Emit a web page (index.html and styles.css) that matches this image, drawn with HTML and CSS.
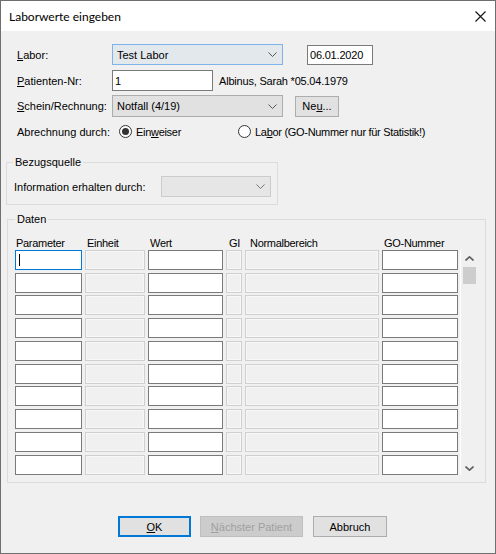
FILE: index.html
```html
<!DOCTYPE html>
<html lang="de">
<head>
<meta charset="utf-8">
<title>Laborwerte eingeben</title>
<link rel="stylesheet" href="styles.css">
</head>
<body>
<div class="window">
  <div class="titlebar">
    <span class="title">Laborwerte eingeben</span>
    <svg class="close" width="11" height="11" viewBox="0 0 11 11"><path d="M0.5 0.5 L10.5 10.5 M10.5 0.5 L0.5 10.5" stroke="#111" stroke-width="1.1" fill="none"/></svg>
  </div>
  <div class="client">
    <div class="row row-labor">
      <span class="lbl"><u>L</u>abor:</span>
      <div class="combo combo-active">
        <span class="combo-text">Test Labor</span>
        <svg class="chev" width="9" height="5" viewBox="0 0 9 5"><path d="M0.5 0.5 L4.5 4.5 L8.5 0.5" stroke="#555" fill="none"/></svg>
      </div>
      <div class="field field-date">06.01.2020</div>
    </div>
    <div class="row row-patient">
      <span class="lbl"><u>P</u>atienten-Nr:</span>
      <div class="field field-patient">1</div>
      <span class="patient-info">Albinus, Sarah *05.04.1979</span>
    </div>
    <div class="row row-schein">
      <span class="lbl"><u>S</u>chein/Rechnung:</span>
      <div class="combo combo-gray">
        <span class="combo-text">Notfall (4/19)</span>
        <svg class="chev" width="9" height="5" viewBox="0 0 9 5"><path d="M0.5 0.5 L4.5 4.5 L8.5 0.5" stroke="#555" fill="none"/></svg>
      </div>
      <div class="btn btn-new">Ne<u>u</u>...</div>
    </div>
    <div class="row row-billing">
      <span class="lbl">Abrechnung durch:</span>
      <span class="option option-first">
        <span class="radio radio-on"></span>
        <span class="radio-label">Ein<u>w</u>eiser</span>
      </span>
      <span class="option">
        <span class="radio"></span>
        <span class="radio-label">La<u>b</u>or (GO-Nummer nur für Statistik!)</span>
      </span>
    </div>

    <div class="group group-source">
      <div class="group-title">Bezugsquelle</div>
      <div class="row row-source">
        <span class="source-lbl">Information erhalten durch:</span>
        <div class="combo combo-disabled">
          <svg class="chev" width="9" height="5" viewBox="0 0 9 5"><path d="M0.5 0.5 L4.5 4.5 L8.5 0.5" stroke="#777" fill="none"/></svg>
        </div>
      </div>
    </div>

    <div class="group group-data">
      <div class="group-title">Daten</div>
      <div class="data">
        <div class="grid">
          <div class="hd hd-param">Parameter</div>
          <div class="hd hd-unit">Einheit</div>
          <div class="hd hd-value">Wert</div>
          <div class="hd hd-gi">GI</div>
          <div class="hd hd-range">Normalbereich</div>
          <div class="hd hd-go">GO-Nummer</div>

          <div class="cell edit focus"><span class="caret"></span></div><div class="cell off"></div><div class="cell edit"></div><div class="cell off"></div><div class="cell off"></div><div class="cell edit"></div>
          <div class="cell edit"></div><div class="cell off"></div><div class="cell edit"></div><div class="cell off"></div><div class="cell off"></div><div class="cell edit"></div>
          <div class="cell edit"></div><div class="cell off"></div><div class="cell edit"></div><div class="cell off"></div><div class="cell off"></div><div class="cell edit"></div>
          <div class="cell edit"></div><div class="cell off"></div><div class="cell edit"></div><div class="cell off"></div><div class="cell off"></div><div class="cell edit"></div>
          <div class="cell edit"></div><div class="cell off"></div><div class="cell edit"></div><div class="cell off"></div><div class="cell off"></div><div class="cell edit"></div>
          <div class="cell edit"></div><div class="cell off"></div><div class="cell edit"></div><div class="cell off"></div><div class="cell off"></div><div class="cell edit"></div>
          <div class="cell edit"></div><div class="cell off"></div><div class="cell edit"></div><div class="cell off"></div><div class="cell off"></div><div class="cell edit"></div>
          <div class="cell edit"></div><div class="cell off"></div><div class="cell edit"></div><div class="cell off"></div><div class="cell off"></div><div class="cell edit"></div>
          <div class="cell edit"></div><div class="cell off"></div><div class="cell edit"></div><div class="cell off"></div><div class="cell off"></div><div class="cell edit"></div>
          <div class="cell edit"></div><div class="cell off"></div><div class="cell edit"></div><div class="cell off"></div><div class="cell off"></div><div class="cell edit"></div>
        </div>
        <div class="scrollbar">
          <svg class="arrow" width="9" height="5" viewBox="0 0 9 5"><path d="M0.5 4.5 L4.5 0.8 L8.5 4.5" stroke="#606060" stroke-width="1.6" fill="none"/></svg>
          <div class="thumb"></div>
          <div class="track"></div>
          <svg class="arrow" width="9" height="5" viewBox="0 0 9 5"><path d="M0.5 0.5 L4.5 4.2 L8.5 0.5" stroke="#606060" stroke-width="1.6" fill="none"/></svg>
        </div>
      </div>
    </div>

    <div class="buttons">
      <div class="btn btn-ok"><u>O</u>K</div>
      <div class="btn btn-next"><u>N</u>ächster Patient</div>
      <div class="btn btn-cancel">Abbruch</div>
    </div>
  </div>
</div>
</body>
</html>
```

FILE: styles.css
```css
* {
  box-sizing: border-box;
}

body {
  margin: 0;
  width: 496px;
  height: 554px;
  font-family: "Liberation Sans", Arial, sans-serif;
  font-size: 11px;
  color: #000;
  background: #fff;
}

u {
  text-decoration-thickness: 1px;
  text-underline-offset: 1px;
}

.window {
  width: 496px;
  height: 554px;
  border: 1px solid #6f6f6f;
  display: flex;
  flex-direction: column;
}

/* title bar */
.titlebar {
  height: 30px;
  flex: none;
  background: #fff;
  display: flex;
  align-items: center;
  justify-content: space-between;
  padding: 1px 9px 0 8px;
}

.title {
  font-family: "Segoe UI", Lato, "Noto Sans", sans-serif;
  font-size: 12px;
}

.close {
  display: block;
}

/* dialog area */
.client {
  flex: 1;
  background: #f0f0f0;
  display: flex;
  flex-direction: column;
}

.row {
  display: flex;
  align-items: center;
}

.lbl {
  width: 95px;
  flex: none;
  white-space: nowrap;
}

.row-labor {
  margin-top: 13px;
  height: 21px;
  padding-left: 16px;
}

.row-patient {
  margin-top: 5px;
  height: 21px;
  padding-left: 16px;
}

.row-schein {
  margin-top: 4px;
  height: 22px;
  padding-left: 16px;
}

.row-billing {
  margin-top: 7px;
  height: 15px;
  padding-left: 16px;
}

/* combo boxes */
.combo {
  width: 171px;
  height: 21px;
  border: 1px solid #adadad;
  background: #e1e1e1;
  display: flex;
  align-items: center;
  justify-content: space-between;
  padding: 0 5px 0 4px;
}

.combo-active {
  border-color: #7eb4ea;
  background: #e3e8ed;
}

.combo-gray {
  height: 22px;
}

.combo-disabled {
  width: 110px;
  height: 21px;
  border-color: #cccccc;
  background: #e6e6e6;
  justify-content: flex-end;
}

.chev {
  display: block;
}

/* edit fields */
.field {
  height: 20px;
  border: 1px solid #7a7a7a;
  background: #fff;
  display: flex;
  align-items: center;
  padding-left: 2px;
}

.field-date {
  width: 66px;
  margin-left: 24px;
  letter-spacing: -0.2px;
}

.field-patient {
  width: 101px;
  height: 21px;
}

.patient-info {
  margin-left: 6px;
  white-space: nowrap;
  letter-spacing: -0.2px;
}

/* push buttons */
.btn {
  height: 21px;
  border: 1px solid #adadad;
  background: #e1e1e1;
  display: flex;
  align-items: center;
  justify-content: center;
  white-space: nowrap;
}

.btn-new {
  width: 44px;
  margin-left: 12px;
}

/* radio buttons */
.option {
  display: flex;
  align-items: center;
}

.option-first {
  width: 126px;
  padding-left: 7px;
}

.radio {
  width: 13px;
  height: 13px;
  border: 1px solid #333;
  border-radius: 50%;
  background: #fff;
  flex: none;
  display: flex;
  align-items: center;
  justify-content: center;
}

.radio-on::after {
  content: "";
  width: 7px;
  height: 7px;
  border-radius: 50%;
  background: #333;
}

.radio-label {
  margin-left: 4px;
  white-space: nowrap;
  letter-spacing: -0.3px;
}

/* group boxes */
.group {
  border: 1px solid #dcdcdc;
  flex: none;
}

.group-title {
  width: fit-content;
  height: 14px;
  line-height: 14px;
  margin-top: -8px;
  padding: 0 2px;
  background: #f0f0f0;
}

.group-source {
  margin: 23px 0 0 5px;
  width: 272px;
  height: 43px;
}

.group-source .group-title {
  margin-left: 6px;
}

.row-source {
  margin-top: 7px;
  height: 21px;
  padding-left: 7px;
  justify-content: space-between;
  padding-right: 6px;
}

.group-data {
  margin: 14px 0 0 6px;
  width: 479px;
  height: 264px;
}

.group-data .group-title {
  margin-left: 7px;
}

.data {
  display: flex;
  padding-left: 7px;
  margin-top: 10px;
}

/* header track is shorter than its labels so the first row sits right under them */
.grid {
  display: grid;
  grid-template-columns: 67px 60px 75px 16px 134px 76px;
  grid-template-rows: 11px;
  grid-auto-rows: 20px;
  column-gap: 3px;
  row-gap: 2.78px;
}

.grid .hd {
  height: 14px;
  line-height: 14px;
  white-space: nowrap;
  letter-spacing: -0.3px;
}

.hd-param { padding-left: 1px; }
.hd-unit { padding-left: 2px; }
.hd-value { padding-left: 2px; }
.hd-gi { padding-left: 3px; }
.hd-range { padding-left: 5px; }
.hd-go { padding-left: 2px; }

.cell {
  height: 20px;
}

.cell.edit {
  border: 1px solid #7a7a7a;
  background: #fff;
  display: flex;
  align-items: center;
  padding-left: 3px;
}

.cell.edit.focus {
  border-color: #0078d7;
}

.caret {
  width: 1px;
  height: 12px;
  background: #000;
}

.cell.off {
  border: 1px solid #d0d0d0;
  box-shadow: inset 0 0 0 1px #f7f7f7;
  background: #f0f0f0;
}

/* vertical scroll bar beside the grid */
.scrollbar {
  margin-top: 14px;
  margin-left: 2px;
  width: 17px;
  height: 225px;
  border-left: 1px solid #fff;
  display: flex;
  flex-direction: column;
  align-items: center;
  padding-top: 6px;
}

.arrow {
  display: block;
  flex: none;
}

.thumb {
  margin-top: 6px;
  width: 13px;
  height: 17px;
  background: #cdcdcd;
  flex: none;
}

.track {
  flex: 1;
}

.scrollbar .arrow:last-child {
  margin-bottom: 4px;
}

/* bottom buttons */
.buttons {
  display: flex;
  margin-top: 33px;
  padding-left: 117px;
}

.btn-ok {
  width: 73px;
  border: 2px solid #0078d7;
}

.btn-next {
  width: 103px;
  margin-left: 9px;
  background: #cccccc;
  border-color: #bfbfbf;
  color: #a0a0a0;
}

.btn-cancel {
  width: 74px;
  margin-left: 10px;
}
```
